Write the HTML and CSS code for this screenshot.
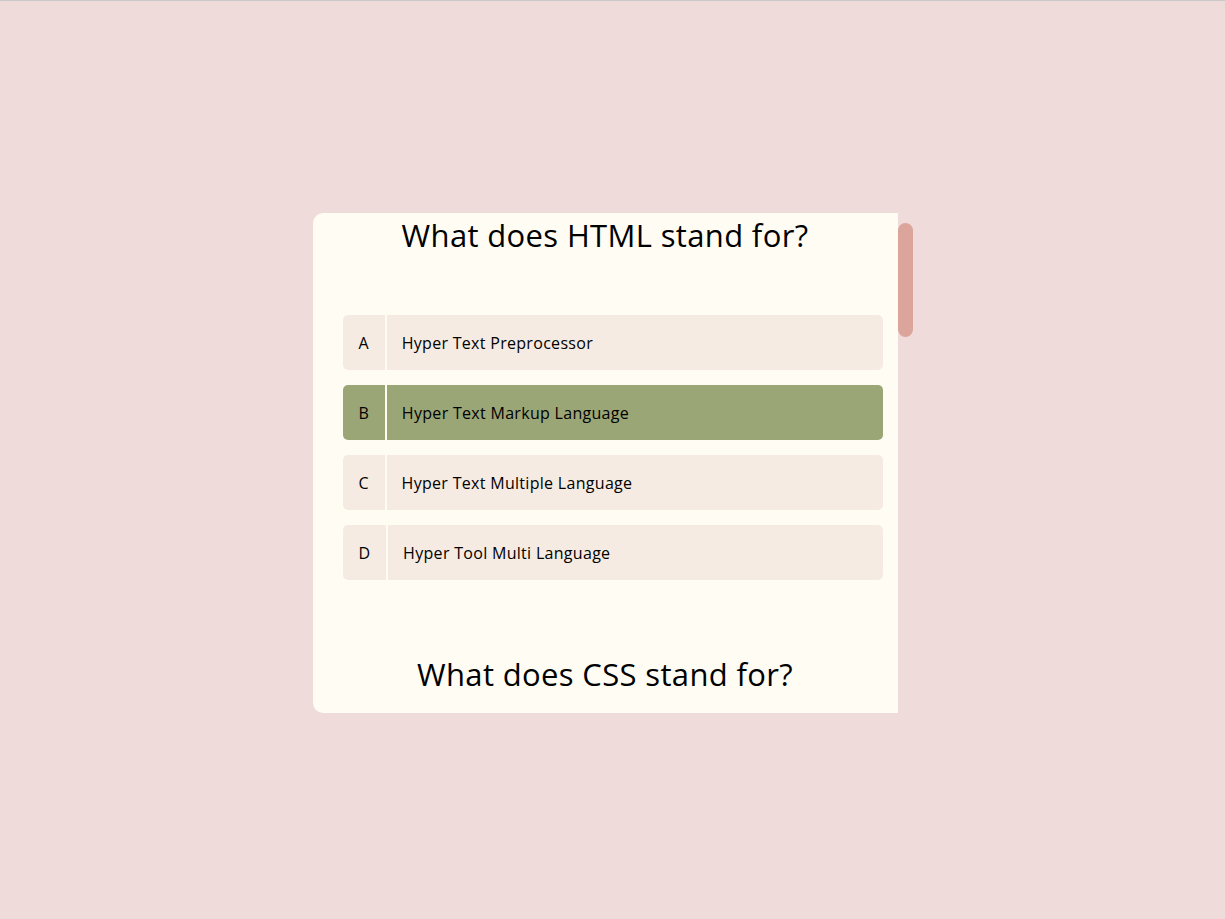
FILE: index.html
```html
<!DOCTYPE html>
<html lang="en">
<head>
<meta charset="utf-8">
<title>Quiz</title>
<link rel="stylesheet" href="styles.css">
</head>
<body>
<main class="page">
  <div class="quiz-frame">
    <section class="quiz">
      <div class="question">
        <h2 class="question-title">What does HTML stand for?</h2>
        <ul class="options">
          <li class="option"><span class="letter">A</span><span class="answer">Hyper Text Preprocessor</span></li>
          <li class="option selected"><span class="letter">B</span><span class="answer">Hyper Text Markup Language</span></li>
          <li class="option"><span class="letter">C</span><span class="answer">Hyper Text Multiple Language</span></li>
          <li class="option"><span class="letter">D</span><span class="answer">Hyper Tool Multi Language</span></li>
        </ul>
      </div>
      <div class="question">
        <h2 class="question-title">What does CSS stand for?</h2>
        <ul class="options">
          <li class="option"><span class="letter">A</span><span class="answer">Creative Style Sheets</span></li>
          <li class="option"><span class="letter">B</span><span class="answer">Cascading Style Sheets</span></li>
          <li class="option"><span class="letter">C</span><span class="answer">Computer Style Sheets</span></li>
          <li class="option"><span class="letter">D</span><span class="answer">Colorful Style Sheets</span></li>
        </ul>
      </div>
    </section>
    <div class="scrollbar" aria-hidden="true">
      <div class="scrollbar-thumb"></div>
    </div>
  </div>
</main>
</body>
</html>
```

FILE: styles.css
```css
* { box-sizing: border-box; }

html, body {
  margin: 0;
  padding: 0;
}

body {
  background: #efdbda;
  border-top: 1px solid #c9c9c9;
  font-family: "Open Sans", "Liberation Sans", sans-serif;
  color: #000;
}

.page {
  min-height: 918px;
  padding-top: 6px;
  display: flex;
  align-items: center;
  justify-content: center;
}

.quiz-frame {
  display: flex;
  width: 600px;
  height: 500px;
}

.quiz {
  width: 585px;
  height: 500px;
  background: #fffcf4;
  border-radius: 10px 0 0 10px;
  overflow: hidden;
}

.scrollbar {
  width: 15px;
  padding-top: 10px;
  display: flex;
  flex-direction: column;
}

.scrollbar-thumb {
  height: 114px;
  background: #dba59c;
  border-radius: 8px;
}

.question {
  margin-bottom: 72px;
}

.question-title {
  margin: 0;
  height: 45px;
  font-size: 31px;
  font-weight: 400;
  line-height: 45px;
  text-align: center;
  letter-spacing: 0.35px;
}

.options {
  list-style: none;
  margin: 57px 0 0 30px;
  padding: 0;
  width: 540px;
  display: flex;
  flex-direction: column;
  gap: 15px;
}

.option {
  display: flex;
  align-items: stretch;
  height: 55px;
  background: #f5ebe2;
  border-radius: 5px;
  font-size: 16px;
  overflow: hidden;
}

.option.selected {
  background: #9ba677;
}

.letter {
  display: flex;
  align-items: center;
  padding: 0 16px;
  border-right: 2px solid #fffcf4;
}

.answer {
  display: flex;
  align-items: center;
  padding-left: 15px;
  letter-spacing: 0.3px;
}
```
